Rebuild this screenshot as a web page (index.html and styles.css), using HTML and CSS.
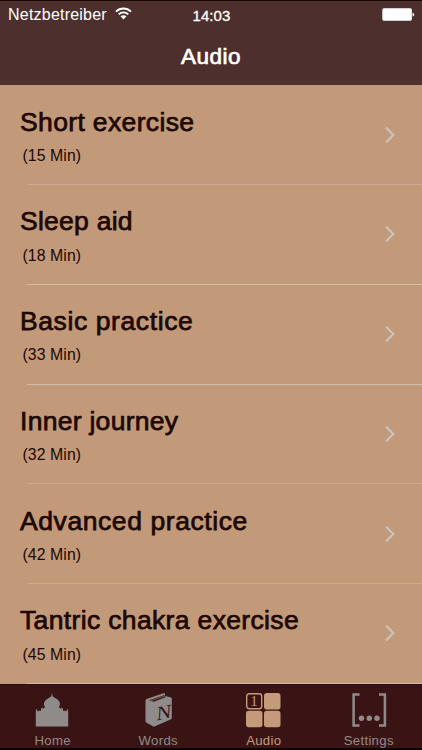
FILE: index.html
```html
<!DOCTYPE html>
<html lang="en">
<head>
  <meta charset="utf-8">
  <title>Audio</title>
  <link rel="stylesheet" href="styles.css">
</head>
<body>
<header>
  <div class="status">
    <span class="carrier">Netzbetreiber
      <svg width="17" height="13" viewBox="0 0 17 13" fill="none" stroke="#fff" stroke-width="1.9">
        <path d="M1 4.6C5.2.4 11.8.4 16 4.6M3.7 7.4c2.7-2.7 6.9-2.7 9.6 0"/>
        <path d="M5.5 9.3c1.7-1.5 4.3-1.5 6 0L8.500 12.4z" fill="#fff" stroke="none"/>
      </svg>
    </span>
    <span class="clock">14:03</span>
    <svg class="battery" width="33" height="13" viewBox="0 0 33 13" fill="#fff">
      <rect x=".3" y=".3" width="29.6" height="12.4" rx="1.6"/>
      <path d="M30.6 4.4c2.2.8 2.2 3.4 0 4.2z"/>
    </svg>
  </div>
  <h1>Audio</h1>
</header>

<ul class="list">
  <li class="faint">
    <div><h2 class="short">Short exercise</h2><p>(15 Min)</p></div>
    <svg class="arrow" width="12" height="18" viewBox="0 0 12 18"><path d="M2 1.6L9.4 9 2 16.4"/></svg>
  </li>
  <li>
    <div><h2 class="sleep">Sleep aid</h2><p>(18 Min)</p></div>
    <svg class="arrow" width="12" height="18" viewBox="0 0 12 18"><path d="M2 1.6L9.4 9 2 16.4"/></svg>
  </li>
  <li>
    <div><h2 class="basic">Basic practice</h2><p>(33 Min)</p></div>
    <svg class="arrow" width="12" height="18" viewBox="0 0 12 18"><path d="M2 1.6L9.4 9 2 16.4"/></svg>
  </li>
  <li class="faint">
    <div><h2 class="inner">Inner journey</h2><p>(32 Min)</p></div>
    <svg class="arrow" width="12" height="18" viewBox="0 0 12 18"><path d="M2 1.6L9.4 9 2 16.4"/></svg>
  </li>
  <li class="faint">
    <div><h2 class="advanced">Advanced practice</h2><p>(42 Min)</p></div>
    <svg class="arrow" width="12" height="18" viewBox="0 0 12 18"><path d="M2 1.6L9.4 9 2 16.4"/></svg>
  </li>
  <li>
    <div><h2 class="tantric">Tantric chakra exercise</h2><p>(45 Min)</p></div>
    <svg class="arrow" width="12" height="18" viewBox="0 0 12 18"><path d="M2 1.6L9.4 9 2 16.4"/></svg>
  </li>
</ul>

<nav>
  <a class="tab">
    <svg width="36" height="36" viewBox="0 0 36 36" fill="#8f8b8a">
      <path d="M1.800 34.500V20L2.200 17h.4L3.800 19.500 5.500 18.500 7 19V17l1.200-1.500 1.200 1.300 1.600-1.600C8.800 11.500 10.500 8.500 14 6.500 16 5.500 17 4.800 17.500 3.500L17.900 0 18.400 3.500C18.900 4.800 20 5.500 22 6.500 25.500 8.500 27.200 11.500 25 15.200l1.600 1.600 1.200-1.300L29 17v2l1.500-.5 1.700 1 1.200-2.500h.4L34.200 20v14.500z"/>
    </svg>
    <span>Home</span>
  </a>
  <a class="tab">
    <svg width="36" height="36" viewBox="0 0 36 36">
      <path d="M5.500 8.500Q5.500 7.300 6.500 6.900L24 1l1 .8-.3 2L31 5.600q.8.200.8 1V26q0 .9-.8 1.200L14.500 34.500q-.8.300-1.600-.2L6.300 30.500q-.8-.5-.8-1.400z" fill="#8f8b8a"/>
      <path d="M9 8.200L24 3.200l2 1.700L13.800 9.700z" fill="#3a1414"/>
      <path d="M11 8.500L25 4" fill="none" stroke="#8f8b8a" stroke-width=".6"/>
      <text class="letter" transform="matrix(1 -.2 -.06 1 16.600 28.500)">N</text>
    </svg>
    <span>Words</span>
  </a>
  <a class="tab active">
    <svg width="36" height="36" viewBox="0 0 36 36" fill="#c39a7a">
      <rect x="1.700" y="1.700" width="15" height="15" rx="2.500" fill="none" stroke="#c39a7a" stroke-width="1.400"/>
      <rect x="19" y="1" width="16.500" height="16.500" rx="2.800"/>
      <rect x="1" y="18.800" width="16.500" height="16.500" rx="2.800"/>
      <rect x="19" y="18.800" width="16.500" height="16.500" rx="2.800"/>
      <text class="one" x="5.200" y="14.300">1</text>
    </svg>
    <span>Audio</span>
  </a>
  <a class="tab">
    <svg width="36" height="36" viewBox="0 0 36 36" fill="#8f8b8a">
      <path d="M8.500 2.500H2.600v31h5.900M28 2.500h5.900v31H28" fill="none" stroke="#8f8b8a" stroke-width="2.500"/>
      <circle cx="10.500" cy="26.300" r="2.700"/>
      <circle cx="18.300" cy="26.300" r="2.700"/>
      <circle cx="26" cy="26.300" r="2.700"/>
    </svg>
    <span class="settings">Settings</span>
  </a>
</nav>
</body>
</html>
```
FILE: styles.css
```css
* {
    box-sizing: border-box;
    margin: 0;
    padding: 0;
}

body {
    width: 422px;
    height: 750px;
    overflow: hidden;
    display: flex;
    flex-direction: column;
    font-family: "Liberation Sans", Arial, Helvetica, sans-serif;
    background: #c29979;
    color: #1d0800;
}

header {
    height: 85px;
    flex: none;
    background: #4d302e;
    border-top: 1px solid #170807;
    color: #fff;
}

.status {
    display: grid;
    grid-template-columns: 1fr 40px 1fr;
    align-items: center;
    height: 28px;
    padding: 0 7px 0 8px;
    font-size: 16px;
}

.carrier {
    display: flex;
    align-items: center;
    gap: 8px;
    letter-spacing: .22px;
}

.carrier svg {
    margin-top: -3px;
}

.clock {
    justify-self: center;
    font-size: 15px;
    letter-spacing: .1px;
    -webkit-text-stroke: .3px #fff;
}

.battery {
    justify-self: end;
    margin-top: -2px;
}

h1 {
    margin-top: 14px;
    text-align: center;
    font-size: 22.500px;
    line-height: 28px;
    font-weight: normal;
    letter-spacing: .5px;
    -webkit-text-stroke: .7px #fff;
}

.list {
    list-style: none;
    flex: none;
    height: 599px;
}

.list li {
    display: flex;
    justify-content: space-between;
    height: 99.75px;
    padding: 20.5px 26px 0 20px;
    background: linear-gradient(#d2bcab, #d2bcab) no-repeat 27px 99px / 395px 1px;
}

.list .faint {
    background-image: linear-gradient(#ccaa91, #ccaa91);
}

h2 {
    font-size: 26.5px;
    line-height: 32px;
    font-weight: normal;
    white-space: nowrap;
    -webkit-text-stroke: .75px #1d0800;
}

.short {
    letter-spacing: .36px;
}

.sleep {
    letter-spacing: .25px;
}

.basic {
    letter-spacing: .6px;
}

.inner {
    letter-spacing: .28px;
}

.advanced {
    letter-spacing: .58px;
}

.tantric {
    letter-spacing: .35px;
}

.list p {
    margin: 8.4px 0 0 2.4px;
    font-size: 15.8px;
    line-height: 20px;
    letter-spacing: .1px;
}

.arrow {
    margin-top: 20px;
    fill: none;
    stroke: #ccc2bd;
    stroke-width: 2.2;
}

nav {
    display: grid;
    grid-template-columns: repeat(4, 1fr);
    height: 66px;
    flex: none;
    background: #3a1414;
    border-top: 1px solid #2a0d0c;
    border-bottom: 2px solid #0b0302;
}

.tab {
    display: flex;
    flex-direction: column;
    align-items: center;
    padding-top: 7px;
    color: #8f8b8a;
    font-size: 13.2px;
    line-height: 16px;
    letter-spacing: .3px;
}

.tab svg {
    margin-left: -1px;
}

.tab span {
    margin-top: 5px;
}

.tab .settings {
    margin-left: -1px;
}

.tab.active {
    color: #c39a7a;
}

.letter {
    font: 20px "Liberation Serif", serif;
    fill: #3a1414;
}

.one {
    font: 15px "Liberation Serif", serif;
}
```
